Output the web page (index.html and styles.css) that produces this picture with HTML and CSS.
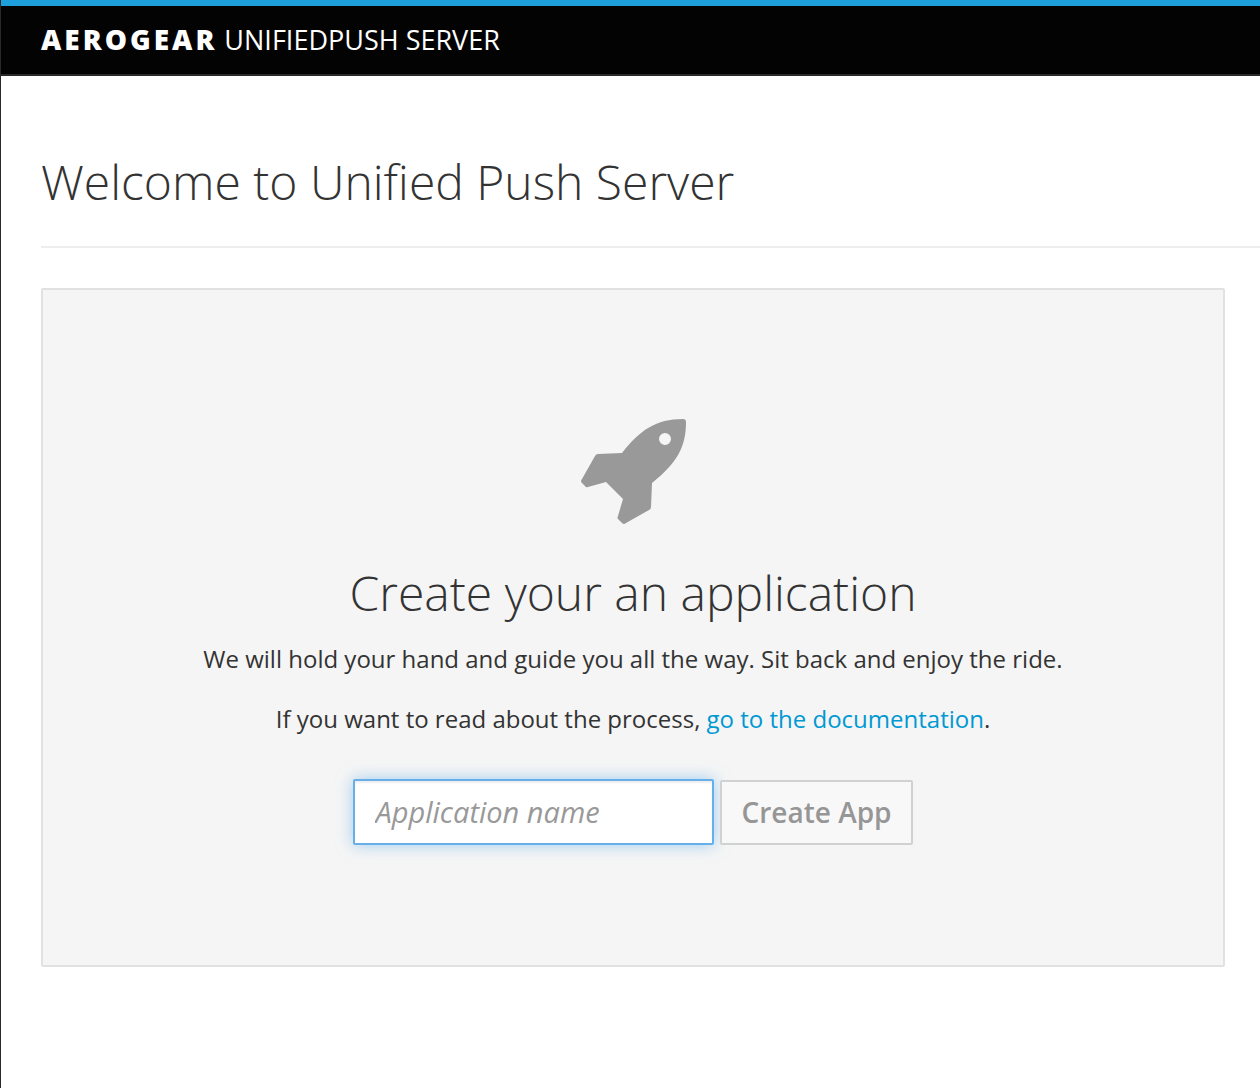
FILE: index.html
```html
<!DOCTYPE html>
<html lang="en">
<head>
<meta charset="utf-8">
<title>AeroGear UnifiedPush Server</title>
<link rel="stylesheet" href="styles.css">
</head>
<body>
<header class="navbar"><span class="brand"><strong class="brand-name">AEROGEAR</strong> UNIFIEDPUSH SERVER</span></header>
<main class="content">
  <h1 class="page-title">Welcome to Unified Push Server</h1>
  <section class="blank-slate">
    <svg class="rocket" viewBox="0 0 106 106" aria-hidden="true"><path fill-rule="evenodd" d="M103 0Q106 0 106 3C106 28 97 44 72 64L71 88Q71 90 69 91L46 104Q44 106 42 104L38 100Q37 99 38 97L43 80L26 63L8 68Q6 69 5 67L2 64Q0 62 2 60L15 37Q16 35 18 35L42 34C60 11 76 0 103 0ZM85 14A6 6 0 1 0 85 26A6 6 0 1 0 85 14Z"/></svg>
    <h2 class="slate-title">Create your an application</h2>
    <p class="slate-text">We will hold your hand and guide you all the way. Sit back and enjoy the ride.</p>
    <p class="slate-text">If you want to read about the process, <a class="link" href="#documentation">go to the documentation</a>.</p>
    <form class="create-form">
      <input class="name-input" type="text" aria-label="Application name" placeholder="Application name">
      <button class="create-button" type="submit" disabled>Create App</button>
    </form>
  </section>
</main>
</body>
</html>
```
FILE: styles.css
```css
* { box-sizing: border-box; }
body {
  margin: 0;
  min-height: 100vh;
  border-left: 1px solid #292929;
  background: #fff;
  color: #333;
  font-family: "Open Sans", sans-serif;
  font-size: 24px;
}
.navbar {
  display: flex;
  align-items: center;
  height: 76px;
  padding: 0 40px 2px;
  border-top: 6px solid #1d9fdc;
  border-bottom: 2px solid #292929;
  background: #030303;
  color: #fff;
}
.brand { font-size: 27px; line-height: 36px; }
.brand-name { font-size: 28px; font-weight: 800; letter-spacing: 3px; }
.content { padding: 74px 0 40px 40px; }
.page-title {
  margin: 0 0 40px;
  padding-bottom: 32px;
  border-bottom: 2px solid #eee;
  font-size: 48px;
  font-weight: 300;
  line-height: 64px;
}
.blank-slate {
  display: flex;
  flex-direction: column;
  align-items: center;
  margin-right: 35px;
  padding: 129px 40px 120px;
  border: 2px solid #e1e1e1;
  border-radius: 2px;
  background: #f5f5f5;
  text-align: center;
}
.rocket { width: 106px; height: 106px; fill: #999; }
.slate-title {
  margin: 36px 0 14px;
  font-size: 48px;
  font-weight: 300;
  line-height: 64px;
}
.slate-text { margin: 0 0 20px; line-height: 40px; }
.link { color: #0099d3; text-decoration: none; }
.create-form { display: flex; align-items: flex-end; gap: 6px; margin-top: 20px; }
.name-input, .create-button {
  height: 66px;
  padding: 0 20px 2px;
  border: 2px solid #66afe9;
  border-radius: 2px;
  font-family: inherit;
  font-size: 28px;
}
.name-input {
  width: 361px;
  background: #fff;
  color: #333;
  font-size: 29px;
  box-shadow: inset 0 2px 2px rgba(0, 0, 0, 0.07), 0 0 16px rgba(102, 175, 233, 0.6);
  outline: none;
}
.name-input::placeholder { color: #999; font-style: italic; opacity: 1; }
.create-button {
  height: 65px;
  padding: 0 19px 2px;
  border-color: #d1d1d1;
  background: #f8f8f8;
  color: #969696;
  font-weight: 600;
}
```
